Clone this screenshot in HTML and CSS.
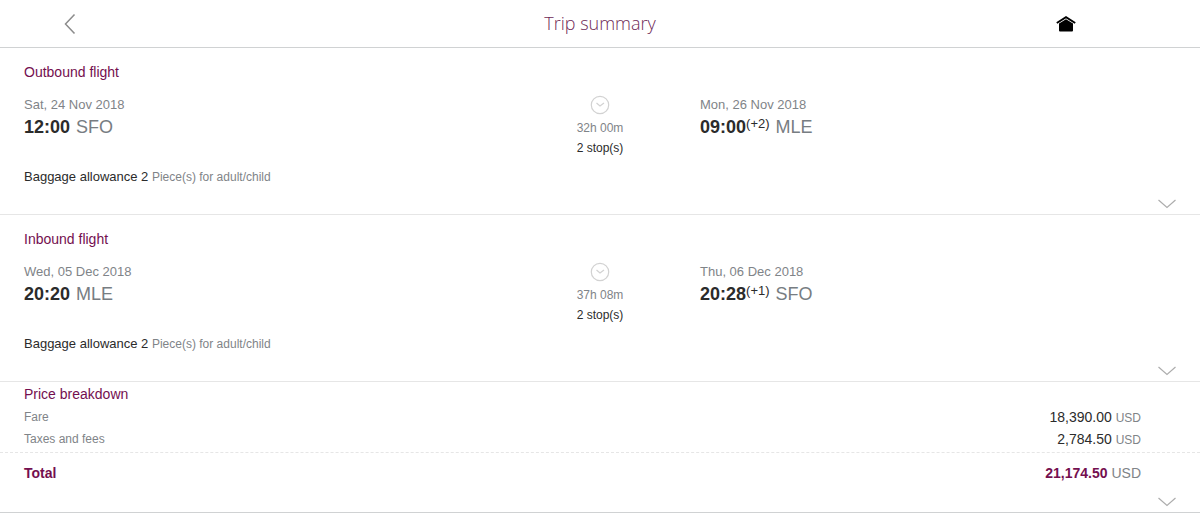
FILE: index.html
```html
<!DOCTYPE html>
<html lang="en">
<head>
<meta charset="utf-8">
<meta name="viewport" content="width=device-width, initial-scale=1">
<title>Trip summary</title>
<link rel="stylesheet" href="styles.css">
</head>
<body>
<header class="topbar">
  <button class="icon-button back" type="button" aria-label="Back">
    <svg width="12" height="22" viewBox="0 0 12 22"><path d="M10.500 1.500 1.500 11l9 9.500" fill="none" stroke="#8c8c8c" stroke-width="1.500"/></svg>
  </button>
  <h1 class="title">Trip summary</h1>
  <a class="home" href="#" aria-label="Home">
    <svg width="20" height="16" viewBox="0 0 20 16"><path d="M.8 7 10 1.200 19.200 7" fill="none" stroke="#000" stroke-width="2"/><path d="M3 7.400 10 3.200l7 4.200V14.500q0 1-1 1H4q-1 0-1-1Z" fill="#000"/></svg>
  </a>
</header>
<main>
  <section class="flight">
    <h2 class="heading">Outbound flight</h2>
    <div class="route">
      <div class="stop">
        <p class="date">Sat, 24 Nov 2018</p>
        <p class="time"><strong>12:00</strong> <span class="airport">SFO</span></p>
      </div>
      <div class="duration">
        <svg class="clock" width="20" height="20" viewBox="0 0 20 20" fill="none" stroke="#d2d2d2"><circle cx="10" cy="10" r="8.700" stroke-width="1.200"/><path d="m6.500 8 3.500 3 4-3" stroke-width="1.200"/></svg>
        <p class="elapsed">32h 00m</p>
        <p class="stops">2 stop(s)</p>
      </div>
      <div class="stop">
        <p class="date">Mon, 26 Nov 2018</p>
        <p class="time"><strong>09:00</strong><sup class="days">(+2)</sup> <span class="airport">MLE</span></p>
      </div>
    </div>
    <p class="baggage">Baggage allowance 2 <span class="note">Piece(s) for adult/child</span></p>
    <button class="icon-button expand" type="button" aria-label="Show outbound flight details">
      <svg width="20" height="10" viewBox="0 0 20 10"><path d="m1.500 1 8.500 7.500L18.500 1" fill="none" stroke="#adadad" stroke-width="1.200"/></svg>
    </button>
  </section>
  <section class="flight">
    <h2 class="heading">Inbound flight</h2>
    <div class="route">
      <div class="stop">
        <p class="date">Wed, 05 Dec 2018</p>
        <p class="time"><strong>20:20</strong> <span class="airport">MLE</span></p>
      </div>
      <div class="duration">
        <svg class="clock" width="20" height="20" viewBox="0 0 20 20" fill="none" stroke="#d2d2d2"><circle cx="10" cy="10" r="8.700" stroke-width="1.200"/><path d="m6.500 8 3.500 3 4-3" stroke-width="1.200"/></svg>
        <p class="elapsed">37h 08m</p>
        <p class="stops">2 stop(s)</p>
      </div>
      <div class="stop">
        <p class="date">Thu, 06 Dec 2018</p>
        <p class="time"><strong>20:28</strong><sup class="days">(+1)</sup> <span class="airport">SFO</span></p>
      </div>
    </div>
    <p class="baggage">Baggage allowance 2 <span class="note">Piece(s) for adult/child</span></p>
    <button class="icon-button expand" type="button" aria-label="Show inbound flight details">
      <svg width="20" height="10" viewBox="0 0 20 10"><path d="m1.500 1 8.500 7.500L18.500 1" fill="none" stroke="#adadad" stroke-width="1.200"/></svg>
    </button>
  </section>
  <section class="price">
    <h2 class="heading">Price breakdown</h2>
    <dl class="lines">
      <div class="line"><dt class="label">Fare</dt><dd class="amount">18,390.00 <span class="note">USD</span></dd></div>
      <div class="line"><dt class="label">Taxes and fees</dt><dd class="amount">2,784.50 <span class="note">USD</span></dd></div>
      <div class="line total"><dt>Total</dt><dd class="amount"><strong>21,174.50</strong> <span class="currency">USD</span></dd></div>
    </dl>
    <button class="icon-button expand" type="button" aria-label="Show price details">
      <svg width="20" height="10" viewBox="0 0 20 10"><path d="m1.500 1 8.500 7.500L18.500 1" fill="none" stroke="#adadad" stroke-width="1.200"/></svg>
    </button>
  </section>
</main>
</body>
</html>
```

FILE: styles.css
```css
* {
  box-sizing: border-box;
}

body {
  margin: 0;
  background: #fff;
  color: #2b2b2b;
  font: 14px/20px "Liberation Sans", Arial, sans-serif;
}

h1, h2, p, dl, dd {
  margin: 0;
}

svg {
  display: block;
}

.topbar {
  display: grid;
  grid-template-columns: 1fr auto 1fr;
  align-items: center;
  padding: 8px 124px 8px 64px;
  border-bottom: 1px solid #d0d2d3;
}

.icon-button {
  padding: 0;
  border: 0;
  background: none;
  cursor: pointer;
}

.back {
  justify-self: start;
}

.title {
  margin-left: 60px;
  color: #6f2a57;
  font: 300 18px/31px "Open Sans", sans-serif;
}

.home {
  justify-self: end;
}

.flight {
  display: flex;
  flex-direction: column;
  padding: 14px 0 5px;
  border-bottom: 1px solid #e6e6e6;
}

.heading {
  padding: 0 24px;
  color: #740f4f;
  font-size: 14px;
  font-weight: 400;
}

.route {
  display: grid;
  grid-template-columns: 5fr 2fr 5fr;
  margin-top: 13px;
}

.stop:first-child {
  padding-left: 24px;
}

.date {
  color: #7f8488;
  font-size: 13px;
}

.time {
  font-size: 18px;
  line-height: 24px;
}

.airport {
  margin-left: 1px;
  color: #777d82;
}

.days {
  font-size: 13px;
  line-height: 1;
  vertical-align: 5px;
}

.duration {
  text-align: center;
  font-size: 12px;
}

.clock {
  margin: 0 auto 3px;
}

.elapsed {
  color: #7f8488;
}

.baggage {
  margin-top: 9px;
  padding: 0 24px;
  font-size: 13px;
}

.note {
  color: #7f8488;
  font-size: 12px;
  line-height: 1;
}

.expand {
  align-self: flex-end;
  margin: 12px 23px 0 0;
}

.price {
  display: flex;
  flex-direction: column;
  padding: 2px 0 5px;
  border-bottom: 1px solid #d0d2d3;
}

.price .expand {
  margin-top: 13px;
}

.lines {
  margin-top: 2px;
}

.line {
  display: flex;
  justify-content: space-between;
  padding: 1px 59px 1px 24px;
}

.label {
  color: #7f8488;
  font-size: 12px;
}

.total {
  margin-top: 2px;
  padding-top: 10px;
  border-top: 1px dashed #e6e6e6;
  color: #740f4f;
  font-weight: 700;
}

.currency {
  color: #7f8488;
  font-weight: 400;
}
```
